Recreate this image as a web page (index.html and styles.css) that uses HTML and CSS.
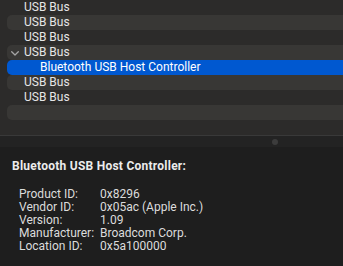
FILE: index.html
```html
<!DOCTYPE html>
<html>
<head>
<meta charset="utf-8">
<link rel="stylesheet" href="styles.css">
</head>
<body>
<div class="list">
  <div class="row"><span class="lbl l1">USB Bus</span></div>
  <div class="row alt"><span class="lbl l1">USB Bus</span></div>
  <div class="row"><span class="lbl l1">USB Bus</span></div>
  <div class="row alt"><svg class="chev" width="8" height="5" viewBox="0 0 8 5"><path d="M0.7 0.7 L4 4 L7.3 0.7" fill="none" stroke="#a5a5a5" stroke-width="1.3" stroke-linecap="round" stroke-linejoin="round"/></svg><span class="lbl">USB Bus</span></div>
  <div class="row sel"><span class="lbl l2">Bluetooth USB Host Controller</span></div>
  <div class="row alt"><span class="lbl l1">USB Bus</span></div>
  <div class="row"><span class="lbl l1">USB Bus</span></div>
  <div class="row alt"></div>
  <div class="row"></div>
</div>
<div class="splitter"><span class="handle"></span></div>
<div class="detail">
  <h1 class="title">Bluetooth USB Host Controller:</h1>
  <dl class="props">
    <dt>Product ID:</dt><dd>0x8296</dd>
    <dt>Vendor ID:</dt><dd>0x05ac (Apple Inc.)</dd>
    <dt>Version:</dt><dd>1.09</dd>
    <dt>Manufacturer:</dt><dd>Broadcom Corp.</dd>
    <dt>Location ID:</dt><dd>0x5a100000</dd>
  </dl>
</div>
</body>
</html>
```
FILE: styles.css
```css
html, body {
  margin: 0;
  padding: 0;
  background: #1e1e1e;
  width: 343px;
  height: 266px;
  overflow: hidden;
  font-family: Roboto, "Liberation Sans", sans-serif;
  font-size: 12px;
  color: #e6e6e6;
}
.list {
  background: #2c2b2a;
  height: 135px;
  overflow: hidden;
  display: flex;
  flex-direction: column;
}
.row {
  height: 15px;
  flex: none;
  margin-left: 7px;
  display: flex;
  align-items: center;
  border-radius: 5px 0 0 5px;
  line-height: 15px;
  white-space: nowrap;
}
.row.alt { background: #383735; }
.row.sel { background: #0058d0; color: #ffffff; }
.lbl.l1 { padding-left: 17px; }
.lbl.l2 { padding-left: 33px; }
.chev { margin-left: 3.5px; margin-right: 5.5px; margin-top: 1px; }
.splitter {
  height: 11px;
  border-top: 1px solid #393939;
  background: #232323;
  display: flex;
  justify-content: flex-end;
  align-items: center;
  padding-right: 65px;
}
.handle {
  width: 6px;
  height: 6px;
  border-radius: 50%;
  background: #3c3c3c;
}
.detail {
  padding: 12px 0 0 12px;
}
.title {
  margin: 0;
  font-size: 12px;
  font-weight: 700;
  line-height: 15px;
  letter-spacing: 0.25px;
  color: #ececec;
}
.props {
  margin: 14px 0 0 7px;
  display: grid;
  grid-template-columns: 81px auto;
  line-height: 13px;
  color: #dcdcdc;
}
.props dt, .props dd { margin: 0; }
```
